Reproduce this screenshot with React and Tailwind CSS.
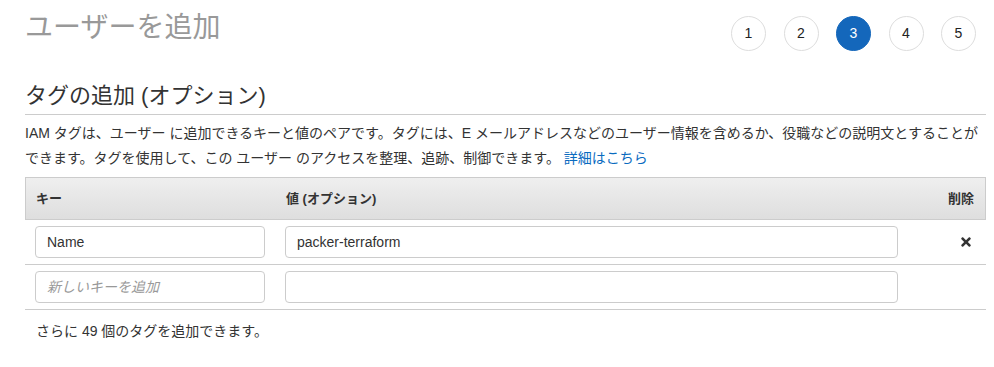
import React from "react";
import { FaTimes } from "react-icons/fa";

const font = { fontFamily: '"Liberation Sans", "Noto Sans CJK JP", sans-serif' };

function Step({ n, active }) {
  return (
    <div
      className={
        "flex h-[35px] w-[35px] items-center justify-center rounded-full text-[14px] " +
        (active
          ? "border border-[#1467bb] bg-[#1467bb] text-white"
          : "border border-[#dddddd] bg-white text-[#222]")
      }
    >
      {n}
    </div>
  );
}

export default function App() {
  return (
    <div className="min-h-[367px] w-[994px] bg-white text-[#333]" style={font}>
      <div className="flex items-start justify-between pl-[25px] pr-[18px] pt-[10px]">
        <h1 className="text-[28px] leading-[36px] font-normal text-[#999]">ユーザーを追加</h1>
        <div className="mt-[6px] flex gap-[17.5px]">
          <Step n={1} />
          <Step n={2} />
          <Step n={3} active />
          <Step n={4} />
          <Step n={5} />
        </div>
      </div>

      <div className="pl-[25px] pr-[8px]">
        <h2 className="mt-[30px] border-b border-[#cccccc] pb-[3px] text-[22px] leading-[30px] font-normal text-[#333]">
          タグの追加 (オプション)
        </h2>
        <p className="mt-[6px] whitespace-nowrap text-[14px] leading-[25px] text-[#333]">
          IAM タグは、ユーザー に追加できるキーと値のペアです。タグには、E メールアドレスなどのユーザー情報を含めるか、役職などの説明文とすることが
          <br />
          できます。タグを使用して、この ユーザー のアクセスを整理、追跡、制御できます。 <a className="text-[#0a6bbf]">詳細はこちら</a>
        </p>

        <div className="mt-[6px]">
          <div className="flex h-[43px] items-center border border-[#cccccc] bg-gradient-to-b from-[#efefef] to-[#dedede] text-[13px] font-bold text-[#333]">
            <div className="w-[250px] pl-[10px]">キー</div>
            <div className="w-[633px] pl-[10px]">値 (オプション)</div>
            <div className="flex-1 pr-[11px] text-right">削除</div>
          </div>

          <div className="flex items-center border-b border-[#cccccc] py-[6px]">
            <div className="w-[250px] px-[10px]">
              <div className="flex h-[32px] w-[230px] items-center rounded-[4px] border border-[#cccccc] px-[11px] text-[14px] text-[#333]">
                Name
              </div>
            </div>
            <div className="w-[633px] px-[10px]">
              <div className="flex h-[32px] w-[613px] items-center rounded-[4px] border border-[#cccccc] px-[11px] text-[14px] text-[#333]">
                packer-terraform
              </div>
            </div>
            <div className="flex flex-1 justify-end pr-[15px]">
              <FaTimes className="h-[14px] w-[10px] text-[#333]" />
            </div>
          </div>

          <div className="flex items-center border-b border-[#cccccc] py-[6px]">
            <div className="w-[250px] px-[10px]">
              <div className="flex h-[32px] w-[230px] items-center rounded-[4px] border border-[#cccccc] px-[11px] text-[14px] italic text-[#999]">
                新しいキーを追加
              </div>
            </div>
            <div className="w-[633px] px-[10px]">
              <div className="h-[32px] w-[613px] rounded-[4px] border border-[#cccccc]" />
            </div>
            <div className="flex-1" />
          </div>
        </div>

        <p className="mt-[11px] pl-[11px] text-[14px] leading-[20px] text-[#333]">さらに 49 個のタグを追加できます。</p>
      </div>
    </div>
  );
}
